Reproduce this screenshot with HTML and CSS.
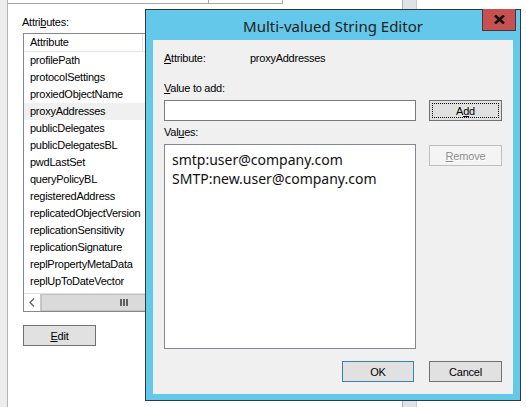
FILE: index.html
```html
<!DOCTYPE html>
<html>
<head>
<meta charset="utf-8">
<link rel="stylesheet" href="styles.css">
</head>
<body>
<div class="screen">
  <div class="edge"></div>
  <div class="panel">
    <div class="tabs"><div class="tab t1"></div><div class="tab t2"></div></div>
    <div class="attrs-label">Attri<u>b</u>utes:</div>
    <div class="listbox">
      <div class="lb-header"><div class="lb-col">Attribute</div></div>
      <div class="lb-rows">
        <div class="lb-row">profilePath</div>
        <div class="lb-row">protocolSettings</div>
        <div class="lb-row">proxiedObjectName</div>
        <div class="lb-row sel">proxyAddresses</div>
        <div class="lb-row">publicDelegates</div>
        <div class="lb-row">publicDelegatesBL</div>
        <div class="lb-row">pwdLastSet</div>
        <div class="lb-row">queryPolicyBL</div>
        <div class="lb-row">registeredAddress</div>
        <div class="lb-row">replicatedObjectVersion</div>
        <div class="lb-row">replicationSensitivity</div>
        <div class="lb-row">replicationSignature</div>
        <div class="lb-row">replPropertyMetaData</div>
        <div class="lb-row">replUpToDateVector</div>
      </div>
      <div class="hscroll">
        <div class="sb-btn"><svg width="6" height="9" viewBox="0 0 6 9"><path d="M5 0.5 L1 4.5 L5 8.5" fill="none" stroke="#606060" stroke-width="1.3"/></svg></div>
        <div class="sb-thumb"><svg width="8" height="7" viewBox="0 0 8 7"><rect x="0" y="0" width="2" height="7" fill="#606060"/><rect x="3" y="0" width="2" height="7" fill="#606060"/><rect x="6" y="0" width="2" height="7" fill="#606060"/></svg></div>
        <div class="sb-track"></div>
      </div>
    </div>
    <button class="btn edit"><u>E</u>dit</button>
  </div>
  <div class="bg-scroll"></div>

  <div class="dialog">
    <div class="titlebar">
      <span class="title">Multi-valued String Editor</span>
      <div class="close"><svg width="11" height="9" viewBox="0 0 11 9"><path d="M1 0.5 L10 8.5 M10 0.5 L1 8.5" stroke="#111" stroke-width="2.6"/></svg></div>
    </div>
    <div class="client">
      <div class="attr-row"><span class="attr-name"><u>A</u>ttribute:</span><span>proxyAddresses</span></div>
      <div class="lbl value-lbl"><u>V</u>alue to add:</div>
      <div class="grid-row">
        <div class="input"></div>
        <button class="btn focus">A<u>d</u>d</button>
      </div>
      <div class="lbl values-lbl">Val<u>u</u>es:</div>
      <div class="grid-row values-row">
        <div class="values">
          <div class="val">smtp:user@company.com</div>
          <div class="val">SMTP:new.user@company.com</div>
        </div>
        <button class="btn disabled"><u>R</u>emove</button>
      </div>
      <div class="footer">
        <button class="btn ok">OK</button>
        <button class="btn">Cancel</button>
      </div>
    </div>
  </div>
</div>
</body>
</html>
```
FILE: styles.css
```css
html, body {
  margin: 0;
  padding: 0;
  background: #fff;
}
.screen {
  position: relative;
  width: 526px;
  height: 407px;
  overflow: hidden;
  display: flex;
  background: #fff;
  font-family: "Liberation Sans", Arial, sans-serif;
  font-size: 11px;
  letter-spacing: -0.25px;
  color: #000;
}
u { text-decoration: underline; text-underline-offset: 1px; }
.edge {
  width: 7px;
  flex: none;
  background: #ededed;
  border-right: 1px solid #b4b4b4;
}
.panel {
  flex: 1;
  display: flex;
  flex-direction: column;
  padding-left: 15px;
}
.tabs {
  display: flex;
  margin-left: -15px;
  height: 4px;
}
.tab {
  height: 3px;
  border-bottom: 1px solid #a8a8a8;
  border-right: 1px solid #a8a8a8;
}
.t1 { width: 200px; }
.t2 { width: 73px; }
.attrs-label {
  margin-top: 12px;
  margin-left: -1px;
  line-height: 13px;
  height: 13px;
}
.listbox {
  margin-top: 4px;
  width: 380px;
  border: 1px solid #828790;
  background: #fff;
  display: flex;
  flex-direction: column;
}
.lb-header {
  height: 18px;
  box-sizing: border-box;
  border-bottom: 1px solid #e5e5e5;
  display: flex;
}
.lb-col {
  width: 119px;
  border-right: 1px solid #e5e5e5;
  padding-left: 6px;
  line-height: 17px;
  box-sizing: border-box;
}
.lb-rows {
  height: 241px;
  overflow: hidden;
}
.lb-row {
  height: 17px;
  line-height: 17px;
  padding-left: 6px;
}
.lb-row.sel { background: #f0f0f0; }
.hscroll {
  height: 18px;
  display: flex;
  background: #f0f0f0;
  box-sizing: border-box;
  border-top: 1px solid #e0e0e0;
}
.sb-btn {
  width: 17px;
  box-sizing: border-box;
  background: #fff;
  border-right: 1px solid #c8c8c8;
  display: flex;
  align-items: center;
  justify-content: center;
}
.sb-thumb {
  width: 166px;
  box-sizing: border-box;
  background: #dadada;
  border: 1px solid #c2c2c2;
  display: flex;
  align-items: center;
  justify-content: center;
}
.sb-track { flex: 1; }
.btn {
  font-family: "Liberation Sans", Arial, sans-serif;
  font-size: 11px;
  letter-spacing: -0.2px;
  color: #000;
  width: 73px;
  height: 21px;
  padding: 0;
  background: #e1e1e1;
  border: 1px solid #707070;
  border-radius: 0;
  box-sizing: border-box;
}
.edit { margin-top: 13px; }

.bg-scroll {
  position: absolute;
  left: 402px;
  top: 0;
  width: 15px;
  height: 407px;
  box-sizing: border-box;
  background: #dde3e7;
  border-left: 1px solid #a9b1b6;
  border-right: 1px solid #c5cbcf;
}

.dialog {
  position: absolute;
  left: 145px;
  top: 9px;
  width: 376px;
  height: 392px;
  box-sizing: border-box;
  border: 1px solid #2f3a40;
  background: #63c8e9;
  display: flex;
  flex-direction: column;
}
.titlebar {
  position: relative;
  height: 30px;
  flex: none;
  display: flex;
  align-items: center;
  justify-content: center;
}
.title {
  font-family: "Noto Sans", "Open Sans", sans-serif;
  font-size: 15px;
  letter-spacing: 0;
  color: #1e1e1e;
  padding-top: 1px;
}
.close {
  position: absolute;
  right: 4px;
  top: -1px;
  width: 34px;
  height: 22px;
  box-sizing: border-box;
  background: #c75050;
  border: 1px solid #4a3434;
  border-top: none;
  display: flex;
  align-items: center;
  justify-content: center;
}
.client {
  flex: 1;
  margin: 0 7px 6px 7px;
  background: #f0f0f0;
  padding: 12px 11px 0 11px;
  display: flex;
  flex-direction: column;
}
.attr-row {
  display: flex;
  line-height: 13px;
  height: 13px;
}
.attr-name { width: 86px; }
.lbl { line-height: 13px; height: 13px; }
.value-lbl { margin-top: 17px; }
.grid-row {
  display: grid;
  grid-template-columns: 252px 73px;
  column-gap: 13px;
  margin-top: 5px;
  align-items: start;
}
.input {
  height: 21px;
  box-sizing: border-box;
  background: #fff;
  border: 1px solid #7a7a7a;
}
.btn.focus {
  outline: 1px dotted #000;
  outline-offset: -4px;
}
.values-lbl { margin-top: 5px; }
.values-row { margin-top: 5px; }
.values {
  height: 205px;
  box-sizing: border-box;
  background: #fff;
  border: 1px solid #828790;
  padding: 5px 7px;
  font-family: "Noto Sans", "Open Sans", sans-serif;
  font-size: 14px;
  letter-spacing: 0;
  color: #111;
}
.val { line-height: 19px; }
.btn.disabled {
  margin-top: 1px;
  background: #f4f4f4;
  border-color: #bfbfbf;
  color: #8d8d8d;
  text-shadow: 1px 1px 0 #fff;
}
.footer {
  margin-top: 12px;
  display: flex;
  justify-content: flex-end;
  gap: 15px;
}
.btn.ok {
  width: 72px;
  border-color: #3c7fb1;
}
```
